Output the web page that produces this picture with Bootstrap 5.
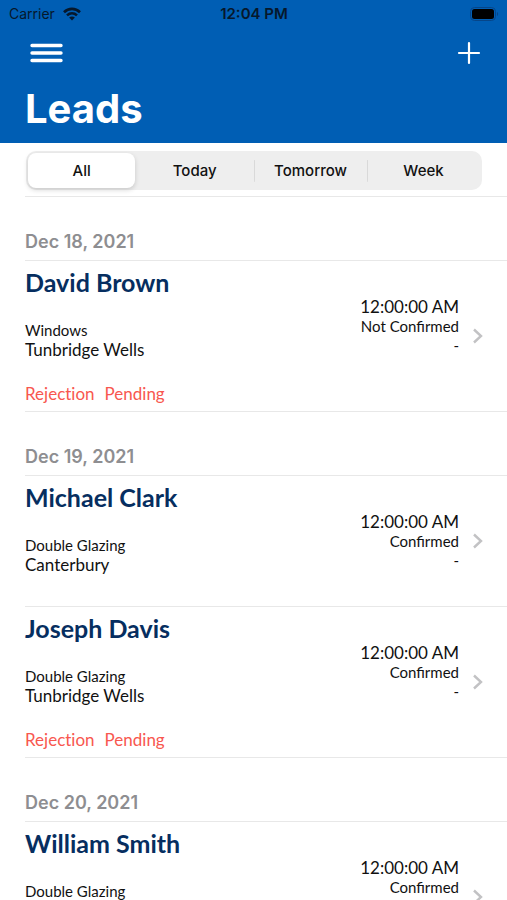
<!DOCTYPE html>
<html lang="en">
<head>
<meta charset="utf-8">
<meta name="viewport" content="width=device-width, initial-scale=1">
<title>Leads</title>
<link href="https://cdn.jsdelivr.net/npm/bootstrap@5.3.0/dist/css/bootstrap.min.css" rel="stylesheet">
<style>
  body { font-family: Lato, sans-serif; color: #111; background: #fff; line-height: 20px; }
  .top-area { background: #005eb4; font-family: Inter, sans-serif; padding-bottom: 10px; }
  .status-bar { display: grid; grid-template-columns: 1fr auto 1fr; height: 28px; padding: 0 8px 0 9px; font-size: 14px; color: #06182c; }
  .status-bar .clock { font-weight: 600; font-size: 15px; }
  .tool-row { height: 49px; padding: 0 26px 0 30px; }
  .page-title { font-size: 40px; line-height: 48px; font-weight: 700; padding: 0 25px; margin-top: 8px; }
  .filter-wrap { padding: 8px 25px 6px 26px; }
  .segments { background: #eee; border-radius: 10px; height: 39px; padding: 2px; font-family: Inter, sans-serif; }
  .segments label { flex: 20 1 0; border-radius: 8px; font-size: 15px; line-height: 35px; font-weight: 500; text-align: center; cursor: pointer; }
  .segments .seg-first { flex-grow: 19; }
  .segments .seg-second { flex-grow: 21; }
  .segments .btn-check:checked + label { background: #fff; box-shadow: 0 2px 5px rgba(0,0,0,.16); }
  .segments .divided { background: linear-gradient(#d9d9d9, #d9d9d9) left center / 1px 22px no-repeat; }
  .lead-list { overflow-y: auto; scrollbar-width: none; min-height: 0; }
  .lead-list::-webkit-scrollbar { display: none; }
  .ruled { border-bottom: 1px solid #e8e8e8; margin-left: 25px; }
  .day { font-family: Inter, sans-serif; font-size: 18px; line-height: 24px; font-weight: 600; color: #8e8e91; height: 64px; padding-bottom: 6px; margin-bottom: 0; }
  .lead-row { color: inherit; padding: 6px 22px 7px 0; }
  .lead-name { font-size: 25px; line-height: 30px; font-weight: 700; color: #062e60; margin: 0 0 24px; }
  .line-sm { font-size: 15px; line-height: 19px; }
  .line-md { font-size: 17px; line-height: 20px; }
  .status-note { font-size: 17px; line-height: 20px; color: #f8574f; margin-top: 24px; gap: 10px; font-variant-ligatures: none; }
  .lead-side { padding-top: 30px; margin-right: 12px; }
  .short-row { min-height: 131px; }
</style>
<script src="https://cdn.jsdelivr.net/npm/bootstrap@5.3.0/dist/js/bootstrap.bundle.min.js" defer></script>
</head>
<body>
<div class="vh-100 d-flex flex-column overflow-hidden">
  <header class="top-area flex-shrink-0">
    <div class="status-bar align-items-center">
      <span class="d-flex align-items-center gap-2">Carrier
        <svg width="18" height="14" viewBox="0 0 18 14" fill="none" stroke="#06182c" stroke-width="2.6" aria-hidden="true"><path d="M1 5.2C5.6.7 12.4.7 17 5.2M4 8.4c3-2.8 7-2.8 10 0"/><path d="M9 13.4 6.1 10.5c1.6-1.5 4.2-1.5 5.8 0z" fill="#06182c" stroke="none"/></svg>
      </span>
      <span class="clock">12:04 PM</span>
      <svg class="ms-auto" width="29" height="14" viewBox="0 0 29 14" aria-hidden="true"><rect x=".5" y=".5" width="25" height="13" rx="4" fill="none" stroke="#064588"/><rect x="2" y="2" width="22" height="10" rx="2.5" fill="#000"/><path d="M27 5v4c1.5-.6 1.5-3.4 0-4z" fill="#064588"/></svg>
    </div>
    <div class="tool-row d-flex align-items-center justify-content-between">
      <button type="button" class="btn p-0 border-0 d-flex" aria-label="Menu">
        <svg width="33" height="20" viewBox="0 0 33 20" stroke="#fff" stroke-width="3.4" stroke-linecap="round"><path d="M2 2.5h29M2 10h29M2 17.5h29"/></svg>
      </button>
      <button type="button" class="btn p-0 border-0 d-flex" aria-label="Add lead">
        <svg width="24" height="24" viewBox="0 0 24 24" stroke="#fff" stroke-width="2.2" stroke-linecap="round"><path d="M12 2v20M2 12h20"/></svg>
      </button>
    </div>
    <h1 class="page-title text-white mb-0">Leads</h1>
  </header>

  <main class="lead-list flex-grow-1">
    <div class="filter-wrap">
      <div class="segments d-flex" role="group" aria-label="Period">
        <input class="btn-check" type="radio" name="period" id="p-all" checked><label class="seg-first" for="p-all">All</label>
        <input class="btn-check" type="radio" name="period" id="p-today"><label class="seg-second" for="p-today">Today</label>
        <input class="btn-check" type="radio" name="period" id="p-tomorrow"><label class="divided" for="p-tomorrow">Tomorrow</label>
        <input class="btn-check" type="radio" name="period" id="p-week"><label class="divided" for="p-week">Week</label>
      </div>
    </div>
    <div class="ruled"></div>

    <section>
      <h2 class="day ruled d-flex align-items-end">Dec 18, 2021</h2>
      <a href="#david" class="lead-row ruled d-flex align-items-center text-decoration-none">
        <div class="flex-grow-1">
          <h3 class="lead-name">David Brown</h3>
          <div class="line-sm">Windows</div>
          <div class="line-md">Tunbridge Wells</div>
          <div class="status-note d-flex"><span>Rejection</span> <span>Pending</span></div>
        </div>
        <div class="lead-side text-end align-self-start">
          <div class="line-md">12:00:00 AM</div>
          <div class="line-sm">Not Confirmed</div>
          <div class="line-sm">-</div>
        </div>
        <svg width="14" height="18" viewBox="0 0 14 18" fill="none" stroke="#c2c2c4" stroke-width="2.4" aria-hidden="true"><path d="m3 2.5 7 6.5-7 6.5"/></svg>
      </a>
    </section>

    <section>
      <h2 class="day ruled d-flex align-items-end">Dec 19, 2021</h2>
      <a href="#michael" class="lead-row short-row ruled d-flex align-items-center text-decoration-none">
        <div class="flex-grow-1 align-self-start">
          <h3 class="lead-name">Michael Clark</h3>
          <div class="line-sm">Double Glazing</div>
          <div class="line-md">Canterbury</div>
        </div>
        <div class="lead-side text-end align-self-start">
          <div class="line-md">12:00:00 AM</div>
          <div class="line-sm">Confirmed</div>
          <div class="line-sm">-</div>
        </div>
        <svg width="14" height="18" viewBox="0 0 14 18" fill="none" stroke="#c2c2c4" stroke-width="2.4" aria-hidden="true"><path d="m3 2.5 7 6.5-7 6.5"/></svg>
      </a>
      <a href="#joseph" class="lead-row ruled d-flex align-items-center text-decoration-none">
        <div class="flex-grow-1">
          <h3 class="lead-name">Joseph Davis</h3>
          <div class="line-sm">Double Glazing</div>
          <div class="line-md">Tunbridge Wells</div>
          <div class="status-note d-flex"><span>Rejection</span> <span>Pending</span></div>
        </div>
        <div class="lead-side text-end align-self-start">
          <div class="line-md">12:00:00 AM</div>
          <div class="line-sm">Confirmed</div>
          <div class="line-sm">-</div>
        </div>
        <svg width="14" height="18" viewBox="0 0 14 18" fill="none" stroke="#c2c2c4" stroke-width="2.4" aria-hidden="true"><path d="m3 2.5 7 6.5-7 6.5"/></svg>
      </a>
    </section>

    <section>
      <h2 class="day ruled d-flex align-items-end">Dec 20, 2021</h2>
      <a href="#william" class="lead-row ruled d-flex align-items-center text-decoration-none">
        <div class="flex-grow-1">
          <h3 class="lead-name">William Smith</h3>
          <div class="line-sm">Double Glazing</div>
          <div class="line-md">Tunbridge Wells</div>
          <div class="status-note d-flex"><span>Rejection</span> <span>Pending</span></div>
        </div>
        <div class="lead-side text-end align-self-start">
          <div class="line-md">12:00:00 AM</div>
          <div class="line-sm">Confirmed</div>
          <div class="line-sm">-</div>
        </div>
        <svg width="14" height="18" viewBox="0 0 14 18" fill="none" stroke="#c2c2c4" stroke-width="2.4" aria-hidden="true"><path d="m3 2.5 7 6.5-7 6.5"/></svg>
      </a>
    </section>
  </main>
</div>
</body>
</html>
